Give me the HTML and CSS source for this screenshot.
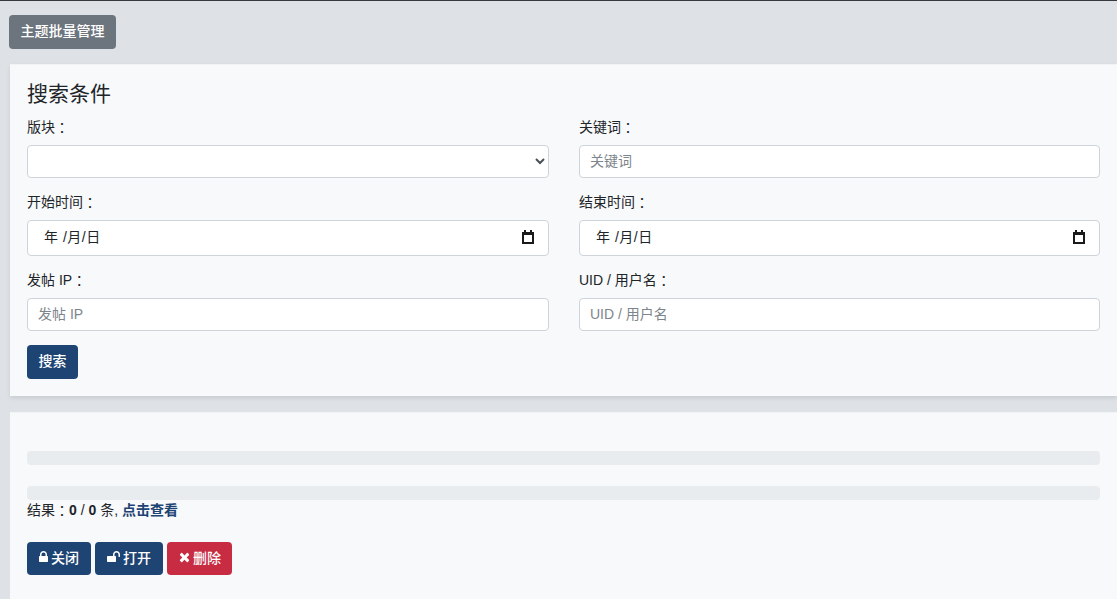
FILE: index.html
```html
<!DOCTYPE html>
<html lang="zh-CN">
<head>
  <meta charset="UTF-8" />
  <meta name="viewport" content="width=device-width, initial-scale=1.0"/>
  <title>主题批量管理</title>
  <link rel="stylesheet" href="styles.css">
</head>
<body>

  <div class="toolbar">
    <button type="button" class="btn btn-gray">主题批量管理</button>
  </div>

  <div class="card search-card">
    <h4>搜索条件</h4>
    <form class="search-form">
      <div class="field">
        <label for="forum">版块<span class="colon" lang="zh-TW">：</span></label>
        <select id="forum" class="control"></select>
      </div>
      <div class="field">
        <label for="keyword">关键词<span class="colon" lang="zh-TW">：</span></label>
        <input type="text" id="keyword" class="control" placeholder="关键词" />
      </div>
      <div class="field">
        <label>开始时间<span class="colon" lang="zh-TW">：</span></label>
        <div class="control date">
          <span>年 /月/日</span>
          <svg class="calendar" viewBox="0 0 14 14"><path d="M3 0h2v2h4V0h2v2h2v12H1V2h2zM3 5v7h8V5z"/></svg>
        </div>
      </div>
      <div class="field">
        <label>结束时间<span class="colon" lang="zh-TW">：</span></label>
        <div class="control date">
          <span>年 /月/日</span>
          <svg class="calendar" viewBox="0 0 14 14"><path d="M3 0h2v2h4V0h2v2h2v12H1V2h2zM3 5v7h8V5z"/></svg>
        </div>
      </div>
      <div class="field">
        <label for="ip">发帖 IP<span class="colon" lang="zh-TW">：</span></label>
        <input type="text" id="ip" class="control" placeholder="发帖 IP" />
      </div>
      <div class="field">
        <label for="uid">UID / 用户名<span class="colon" lang="zh-TW">：</span></label>
        <input type="text" id="uid" class="control" placeholder="UID / 用户名" />
      </div>
    </form>
    <button type="button" class="btn btn-blue">搜索</button>
  </div>

  <div class="card result-card">
    <div class="progress"></div>
    <div class="progress"></div>
    <p class="result">结果<span class="colon" lang="zh-TW">：</span><b>0</b> / <b>0</b> 条, <a href="#">点击查看</a></p>
    <div class="actions">
      <button type="button" class="btn btn-blue">
        <svg class="icon" viewBox="0 0 1152 1792"><path d="M320 768h512v-192q0-106-75-181t-181-75-181 75-75 181v192zm832 96v576q0 40-28 68t-68 28h-960q-40 0-68-28t-28-68v-576q0-40 28-68t68-28h32v-192q0-184 132-316t316-132 316 132 132 316v192h32q40 0 68 28t28 68z"/></svg>关闭
      </button>
      <button type="button" class="btn btn-blue">
        <svg class="icon" viewBox="0 0 1664 1792"><path d="M1664 576v256q0 26-19 45t-45 19h-64q-26 0-45-19t-19-45v-256q0-106-75-181t-181-75-181 75-75 181v192h96q40 0 68 28t28 68v576q0 40-28 68t-68 28h-960q-40 0-68-28t-28-68v-576q0-40 28-68t68-28h672v-192q0-185 131.500-316.500t316.500-131.500 316.500 131.500 131.500 316.500z"/></svg>打开
      </button>
      <button type="button" class="btn btn-red">
        <svg class="icon" viewBox="0 0 1408 1792"><path d="M1298 1322q0 40-28 68l-136 136q-28 28-68 28t-68-28l-294-294-294 294q-28 28-68 28t-68-28l-136-136q-28-28-28-68t28-68l294-294-294-294q-28-28-28-68t28-68l136-136q28-28 68-28t68 28l294 294 294-294q28-28 68-28t68 28l136 136q28 28 28 68t-28 68l-294 294 294 294q28 28 28 68z"/></svg>删除
      </button>
    </div>
  </div>

</body>
</html>
```

FILE: styles.css
```css
* {
  box-sizing: border-box;
}

html,
body {
  height: 599px;
  overflow: hidden;
}

body {
  margin: 0;
  background: #dee2e6;
  border-top: 1px solid #343a40;
  font-family: "Liberation Sans", "Noto Sans CJK SC", sans-serif;
  font-size: 14px;
  line-height: 21px;
  color: #212529;
}

/* fullwidth colon sits centred in the TC glyphs */
.colon {
  font-family: "Noto Sans CJK TC", sans-serif;
  vertical-align: -1px;
}

.toolbar {
  padding: 14px 0 15px 9px;
}

.btn {
  display: inline-flex;
  align-items: center;
  height: 34px;
  padding: 0 10.5px 4px;
  border: 1px solid transparent;
  border-radius: 4px;
  font-family: inherit;
  font-size: 14px;
  font-weight: 500;
  color: white;
  cursor: pointer;
}

.btn-gray {
  background-color: #6c757d;
}

.btn-blue {
  background-color: #1d4473;
}

.btn-red {
  background-color: #c82c42;
}

.card {
  margin-left: 10px;
  padding: 0 17px;
  background: #f8f9fa;
  border-top: 1px solid #f1f3f5;
}

.search-card {
  height: 332px;
  padding-top: 13px;
  box-shadow: 0 2px 4px rgba(0,0,0,0.1);
}

h4 {
  margin: 0;
  height: 32px;
  font-size: 21px;
  font-weight: 400;
  line-height: 32px;
}

.search-form {
  display: grid;
  grid-template-columns: 522px 521px;
  column-gap: 30px;
}

.field {
  padding-top: 7px;
}

.field label {
  display: block;
  height: 21px;
  margin-bottom: 7px;
}

.field:nth-child(n+3) {
  padding-top: 14px;
}

.field:nth-child(n+5) {
  padding-bottom: 14px;
}

.control {
  display: block;
  width: 100%;
  height: 33px;
  padding: 0 10px 2px;
  background-color: white;
  border: 1px solid #ced4da;
  border-radius: 4px;
  font-family: inherit;
  font-size: 14px;
  color: #495057;
}

.control::placeholder {
  color: #7d858c;
  opacity: 1;
}

select.control {
  padding-right: 0;
}

.date {
  display: flex;
  align-items: center;
  justify-content: space-between;
  height: 36px;
  padding: 0 13px 2px 16px;
  color: #212529;
  letter-spacing: 0.5px;
}

.calendar {
  width: 14px;
  height: 14px;
  fill: #1a1a1a;
}

.result-card {
  height: 200px;
  margin-top: 16px;
  padding-top: 38px;
}

.progress {
  height: 14px;
  margin-bottom: 21px;
  background-color: #e9ecef;
  border-radius: 4px;
}

.progress + .progress {
  margin-bottom: 0;
}

.result {
  margin: 0;
  height: 42px;
}

.result a {
  color: #1d4473;
  font-weight: bold;
  text-decoration: none;
}

.actions {
  display: flex;
  gap: 4px;
}

.actions .btn {
  height: 33px;
  padding: 0 11px 3px;
}

.actions .btn-red {
  padding-right: 10px;
}

.icon {
  height: 14px;
  margin-right: 3px;
  fill: white;
}
```
